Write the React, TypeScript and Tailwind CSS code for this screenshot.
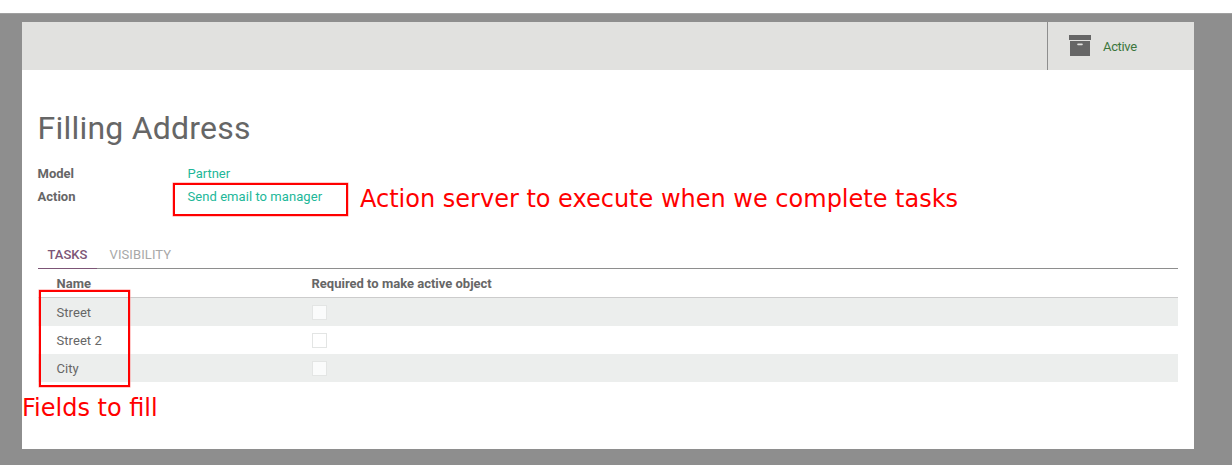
const tasks = ["Street", "Street 2", "City"];

function ArchiveIcon() {
  return (
    <svg className="-mt-0.5" width="22" height="21" viewBox="0 0 22 21" fill="#666666" aria-hidden="true">
      <path d="M0 0h22v5H0z" />
      <path fillRule="evenodd" d="M1 6h20v15H1zM9 8.6q-.8 0-.8.8t.8.8h4q.8 0 .8-.8t-.8-.8z" />
    </svg>
  );
}

function StatusBar() {
  return (
    <div className="flex h-12 justify-end bg-[#e1e1df]">
      <button className="flex w-[147px] items-center border-l border-[#8e8e8e] pl-[21px] text-[#3c763d]">
        <ArchiveIcon />
        <span className="ml-3 pt-px tracking-[-0.35px]">Active</span>
      </button>
    </div>
  );
}

function Fields() {
  return (
    <dl className="mt-[14px] grid grid-cols-[150px_1fr] leading-[23px]">
      <dt className="-ml-[0.5px] font-bold">Model</dt>
      <dd className="-ml-[0.5px] text-[#21b799]">Partner</dd>
      <dt className="-ml-[0.5px] font-bold">Action</dt>
      <dd className="-ml-[0.5px] tracking-[0.06px] text-[#21b799]">Send email to manager</dd>
    </dl>
  );
}

function Tabs() {
  return (
    <div className="mt-8 flex h-[29px] border-b border-[#8e8e8e] font-medium leading-[30px]">
      <div className="-mb-px w-[59px] border-b border-[#7c5576] pl-[9.5px] text-[#7c5576]">TASKS</div>
      <div className="pl-[12.5px] font-normal tracking-[0.1px] text-[#a8a8a8]">VISIBILITY</div>
    </div>
  );
}

function TaskTable() {
  return (
    <div>
      <div className="grid h-[29px] grid-cols-[255px_1fr] items-center border-b border-[#cccccc] pl-[18.5px] pt-0.5 font-bold">
        <span>Name</span>
        <span>Required to make active object</span>
      </div>
      {tasks.map((task) => (
        <div key={task} className="grid h-7 grid-cols-[255px_1fr] items-center pl-[18.5px] odd:bg-white even:bg-[#eceeed]">
          <span className="pt-0.5 tracking-[0.06px]">{task}</span>
          <span className="ml-[0.5px] size-[15px] border border-[#e3e5e4] bg-white/75" />
        </div>
      ))}
    </div>
  );
}

export default function App() {
  return (
    <div className="relative h-[465px] w-[1232px] overflow-hidden bg-white pt-[13px] font-['Roboto',sans-serif] text-[13px] text-[#666666]">
      <div className="h-[452px] border-t border-[#a0a0a0] bg-[#8e8e8e] pl-[22px] pt-2">
        <main className="h-[427px] w-[1172px] bg-white">
          <StatusBar />
          <div className="px-4 pt-[38px]">
            <h1 className="-ml-[0.5px] text-[32px] leading-10 tracking-[0.22px]">Filling Address</h1>
            <Fields />
            <Tabs />
            <TaskTable />
          </div>
        </main>
      </div>
      <div className="absolute left-[173px] top-[183px] h-[33px] w-[175px] border-2 border-[#ff0000] shadow-[0_0_0_0.5px_#ff9999]" />
      <div className="absolute left-[39px] top-[290px] h-[97px] w-[91px] border-2 border-[#ff0000] shadow-[0_0_0_0.5px_#ff9999]" />
      <div className="absolute left-[360px] top-[184px] whitespace-nowrap font-['DejaVu_Sans',sans-serif] text-[24px] leading-[30px] text-[#ff0000]">
        Action server to execute when we complete tasks
      </div>
      <div className="absolute left-[22px] top-[393px] whitespace-nowrap font-['DejaVu_Sans',sans-serif] text-[24px] leading-[30px] text-[#ff0000]">
        Fields to fill
      </div>
    </div>
  );
}
